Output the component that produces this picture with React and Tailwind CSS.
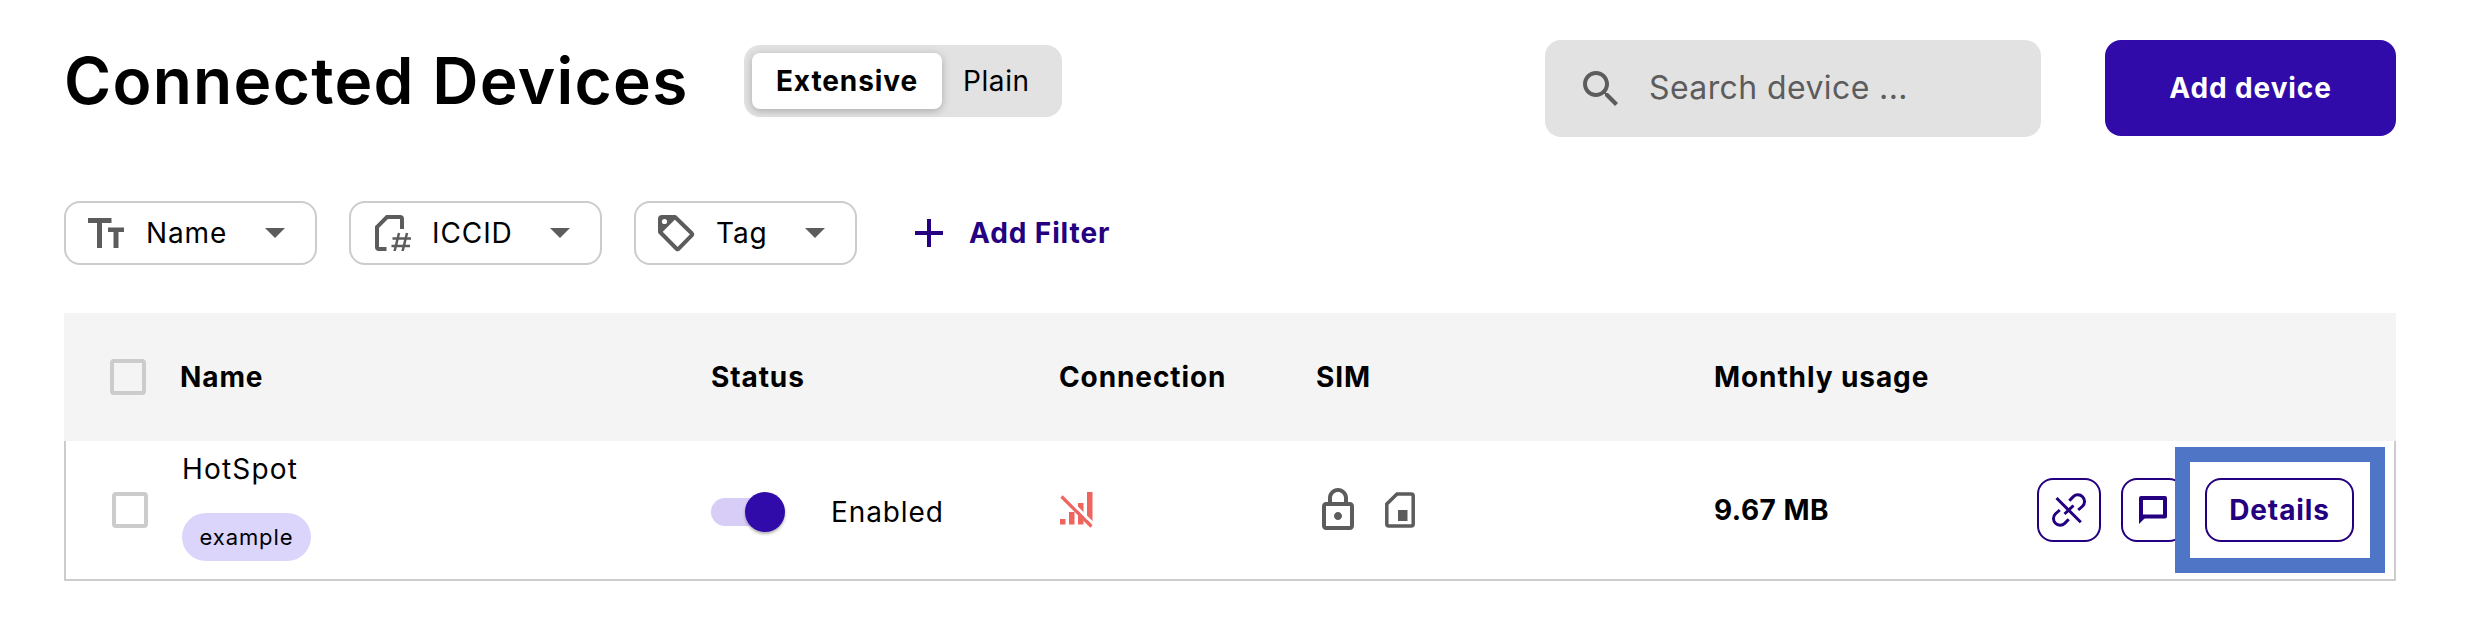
const GREY = 'text-[#5c5c5c]';

function Caret() {
  return (
    <svg className="mr-[30px] h-[10px] w-[20px] shrink-0 text-[#5c5c5c]" viewBox="0 0 20 10" fill="currentColor">
      <path d="M0 0h20L10 10z" />
    </svg>
  );
}

function Chip({ className, icon, label }) {
  return (
    <button className={`flex h-16 items-center rounded-2xl border-2 border-[#cccccc] bg-white ${className}`}>
      {icon}
      <span className="mr-auto ml-[21px]">{label}</span>
      <Caret />
    </button>
  );
}

function SizeIcon() {
  return (
    <svg className={`${GREY} mr-[1px] h-[30px] w-[36px] shrink-0`} viewBox="0 0 36 30" fill="currentColor">
      <path d="M0 0h23.500v5H14V30H9V5H0z" />
      <path d="M20 9.500h16v4.500h-5.500v16h-5V14H20z" />
    </svg>
  );
}

function SimNumberIcon() {
  return (
    <svg className={`${GREY} h-[36px] w-[36px] shrink-0`} viewBox="0 0 36 36" fill="none" stroke="currentColor">
      <path d="M11.500 34H4a2 2 0 0 1-2-2V12L12 2h13a2 2 0 0 1 2 2v10" strokeWidth="4" />
      <path d="M24 18l-4.500 18.500M32 18l-4.500 18.500M17.500 23.500H36M16.500 31H35" strokeWidth="2.500" />
    </svg>
  );
}

function TagIcon() {
  return (
    <svg className={`${GREY} h-[37px] w-[37px] shrink-0`} viewBox="0 0 37 37">
      <path d="M2 4a2 2 0 0 1 2-2h13L33.700 18.300a1.500 1.500 0 0 1 0 2.100L20.700 33.700a1.500 1.500 0 0 1-2.100 0L2 17z" fill="none" stroke="currentColor" strokeWidth="4" strokeLinejoin="round" />
      <path d="M2 2h15.500v2L4 17.500H2z" fill="currentColor" />
      <circle cx="6.500" cy="6.500" r="2.600" fill="#fff" />
    </svg>
  );
}

function NoSignalIcon() {
  return (
    <svg className="h-9 w-[34px] text-[#ee6560]" viewBox="0 0 34 36" fill="currentColor">
      <path d="M0 27h5.500v5.500H0zM9 20h5.500v12.500H9zM18 11h5.500v21.500H18zM27 0h5.500v32H27z" />
      <path d="M4 3l30.500 30" stroke="#fff" strokeWidth="3" />
      <path d="M1.500 4.500l30 30" stroke="currentColor" strokeWidth="3.200" />
    </svg>
  );
}

function LockIcon() {
  return (
    <svg className={`${GREY} -ml-[2px] h-12 w-12`} viewBox="0 0 24 24" fill="currentColor">
      <path d="M18 8h-1V6c0-2.760-2.240-5-5-5S7 3.240 7 6v2H6c-1.100 0-2 .9-2 2v10c0 1.100.9 2 2 2h12c1.100 0 2-.9 2-2V10c0-1.100-.9-2-2-2zM9 6c0-1.660 1.340-3 3-3s3 1.340 3 3v2H9V6zm9 14H6V10h12v10zm-6-3c1.100 0 2-.9 2-2s-.9-2-2-2-2 .9-2 2 .9 2 2 2z" />
    </svg>
  );
}

function SimIcon() {
  return (
    <svg className={`${GREY} ml-[23px] h-[36px] w-[30px]`} viewBox="0 0 30 36" fill="none">
      <path d="M12 2H26.200a2 2 0 0 1 2 2v28a2 2 0 0 1-2 2H3.800a2 2 0 0 1-2-2V12z" stroke="currentColor" strokeWidth="3.500" />
      <path d="M13 18h9.500v11H13z" fill="currentColor" />
    </svg>
  );
}

function UnlinkIcon() {
  return (
    <svg className="h-[34px] w-[34px]" viewBox="0 0 34 34" fill="none" stroke="currentColor" strokeWidth="3">
      <path d="M17.300 7.800l4-4.200a6.650 6.650 0 0 1 9.400 9.400l-4.500 4" />
      <path d="M16.700 26.200l-4 4.200A6.650 6.650 0 0 1 3.300 21l4.500-4" />
      <path d="M12.500 21l9-8.500M4.500 5l24.300 24.300" />
    </svg>
  );
}

function ChatIcon() {
  return (
    <svg className="h-7 w-7" viewBox="0 0 28 28" fill="none" stroke="currentColor" strokeWidth="4" strokeLinejoin="round">
      <path d="M2 2h24v18.500H2z" />
      <path d="M0 19v9l6-6z" fill="currentColor" stroke="none" />
    </svg>
  );
}

function Checkbox() {
  return <span className="block h-9 w-9 shrink-0 rounded-[4px] border-4 border-[#cccccc]" />;
}

const COLUMN_HEADS = ['Status', 'Connection', 'SIM', 'Monthly usage'];

export default function App() {
  return (
    <div className="h-[626px] w-[2466px] overflow-hidden bg-white pr-[70px] pl-16 font-['Inter',sans-serif] text-[28px] leading-8 tracking-[0.9px] text-black">
      <header className="flex h-[137px] items-start pt-10">
        <h1 className="mt-[1px] w-[680px] text-[64px] leading-[80px] font-semibold tracking-[1.28px] whitespace-nowrap">Connected Devices</h1>
        <div className="mt-[5px] flex h-[72px] w-[318px] items-center rounded-2xl bg-[#e2e2e2] p-2">
          <button className="h-14 w-[190px] rounded-lg bg-white font-bold tracking-[0.9px] shadow-[0_2px_8px_rgba(0,0,0,0.25)]">Extensive</button>
          <button className="ml-[21px] tracking-[0.6px]">Plain</button>
        </div>
        <div className="ml-auto flex h-[97px] w-[496px] items-center rounded-2xl bg-[#e2e2e2] pl-[38px] text-[32px] tracking-[0.4px] text-[#5c5c5c]">
          <svg className="h-[35px] w-[35px] shrink-0" viewBox="3 3 17.490 17.490" fill="currentColor">
            <path d="M15.500 14h-.79l-.28-.27C15.410 12.590 16 11.110 16 9.500 16 5.910 13.090 3 9.500 3S3 5.910 3 9.500 5.910 16 9.500 16c1.610 0 3.090-.59 4.230-1.570l.27.28v.79l5 4.990L20.490 19l-4.990-5zm-6 0C7.010 14 5 11.990 5 9.500S7.010 5 9.500 5 14 7.010 14 9.500 11.990 14 9.500 14z" />
          </svg>
          <span className="-mt-[2px] ml-[31px]">Search device ...</span>
        </div>
        <button className="ml-16 h-24 w-[291px] rounded-2xl bg-[#310baa] font-bold tracking-[0.9px] text-white">Add device</button>
      </header>

      <div className="mt-16 flex h-16 items-center">
        <Chip className="w-[253px] pl-[22px]" icon={<SizeIcon />} label="Name" />
        <Chip className="ml-8 w-[253px] pl-[24px]" icon={<SimNumberIcon />} label="ICCID" />
        <Chip className="ml-8 w-[223px] pl-[22px]" icon={<TagIcon />} label="Tag" />
        <button className="ml-[58px] flex items-center gap-[26px] font-bold tracking-[0.9px] text-[#240080]">
          <svg className="h-7 w-7" viewBox="0 0 28 28" stroke="currentColor" strokeWidth="4"><path d="M14 0v28M0 14h28" /></svg>
          Add Filter
        </button>
      </div>

      <section className="mt-12">
        <div className="grid h-32 grid-cols-[647px_348px_257px_398px_1fr] items-center bg-[#f4f4f4] font-bold tracking-[0.9px]">
          <div className="flex items-center pl-[46px]"><Checkbox /><span className="ml-[34px]">Name</span></div>
          {COLUMN_HEADS.map((head) => <div key={head}>{head}</div>)}
        </div>
        <div className="grid h-[140px] grid-cols-[645px_349px_256px_398px_1fr] items-center border-2 border-t-0 border-[#cccccc]">
          <div className="flex items-center pl-[46px]">
            <Checkbox />
            <div className="-mt-[6px] ml-[34px] flex flex-col items-start">
              <span className="tracking-[1.2px]">HotSpot</span>
              <span className="mt-7 flex h-12 w-[129px] items-center justify-center rounded-full bg-[#dbd4fb] text-[22px] tracking-[0.9px]">example</span>
            </div>
          </div>
          <div className="mt-1 flex items-center">
            <div className="flex h-7 w-[68px] items-center rounded-full bg-[#d8cdf6]">
              <span className="ml-[34px] h-10 w-10 shrink-0 rounded-full bg-[#310baa] shadow-[0_2px_3px_rgba(0,0,0,0.3)]" />
            </div>
            <span className="ml-[52px]">Enabled</span>
          </div>
          <NoSignalIcon />
          <div className="flex items-center"><LockIcon /><SimIcon /></div>
          <div className="flex items-center">
            <span className="w-[323px] font-bold tracking-[0.5px]">9.67 MB</span>
            <div className="flex items-center gap-5 text-[#240080]">
              <button className="flex h-16 w-16 items-center justify-center rounded-2xl border-2 border-[#240080]"><UnlinkIcon /></button>
              <button className="flex h-16 w-16 items-center justify-center rounded-2xl border-2 border-[#240080]"><ChatIcon /></button>
              <div className="relative">
                <button className="h-16 w-[149px] rounded-2xl border-2 border-[#240080] font-bold tracking-[0.9px]">Details</button>
                <span className="absolute -top-[31px] -left-[30px] h-[126px] w-[210px] border-[15px] border-[#4f75c7]" />
              </div>
            </div>
          </div>
        </div>
      </section>
    </div>
  );
}
